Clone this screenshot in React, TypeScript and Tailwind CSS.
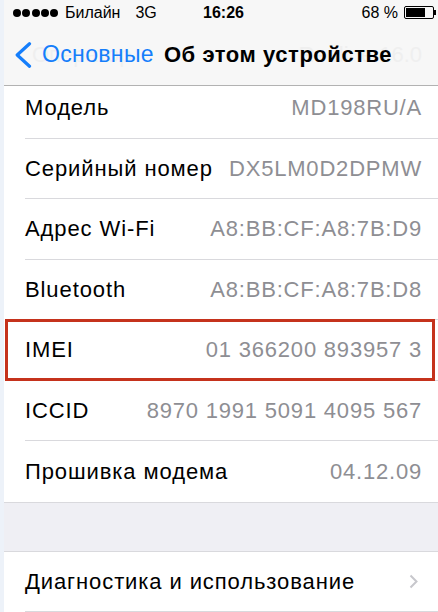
import { FC } from "react";

interface InfoRowType {
    label: string;
    value?: string;
    last?: boolean;
    chevron?: boolean;
    marked?: boolean;
}

const rows: InfoRowType[] = [
    { label: "Модель", value: "MD198RU/A" },
    { label: "Серийный номер", value: "DX5LM0D2DPMW" },
    { label: "Адрес Wi-Fi", value: "A8:BB:CF:A8:7B:D9" },
    { label: "Bluetooth", value: "A8:BB:CF:A8:7B:D8" },
    { label: "IMEI", value: "01 366200 893957 3", marked: true },
    { label: "ICCID", value: "8970 1991 5091 4095 567" },
    { label: "Прошивка модема", value: "04.12.09", last: true },
];

const StatusBar = () => {
    return (
        <div className="flex h-[24px] items-center pl-[9px] pr-[2px] pt-[1px] text-[16px] text-black">
            <div className="flex flex-1 items-center">
                <div className="flex gap-[1.25px]">
                    {[0, 1, 2, 3, 4].map((i) => (
                        <span key={i} className="h-[8px] w-[8px] rounded-full bg-black" />
                    ))}
                </div>
                <span className="ml-[7px]">Билайн</span>
                <span className="ml-[15px]">3G</span>
            </div>
            <span className="absolute left-[199px] font-bold">16:26</span>
            <div className="flex items-center">
                <span>68 %</span>
                <div className="ml-[6px] flex items-center">
                    <div className="h-[13px] w-[30px] rounded-[2px] border border-black p-[1px]">
                        <div className="h-full w-[72%] bg-black" />
                    </div>
                    <div className="h-[5px] w-[2px] bg-black" />
                </div>
            </div>
        </div>
    );
};

const NavBar = () => {
    return (
        <div className="relative flex h-[61px] items-center">
            <span className="absolute left-[28px] text-[22px] text-[#efefef]">Оператор</span>
            <span className="absolute right-[16px] text-[22px] text-[#efefef]">Redline 16.0</span>
            <svg className="relative ml-[11px] h-[26px] w-[17px]" viewBox="0 0 17 26" fill="none">
                <path d="M14.5 1.8 L2.2 13 L14.5 24.2" stroke="#157efb" strokeWidth="3.2" strokeLinecap="round" strokeLinejoin="round" />
            </svg>
            <span className="relative ml-[10px] text-[23px] tracking-[0.35px] text-[#157efb]">Основные</span>
            <span className="relative ml-[10px] text-[22px] font-bold tracking-[0.55px] text-black">Об этом устройстве</span>
        </div>
    );
};

const InfoRow: FC<InfoRowType> = ({ label, value, last, chevron, marked }) => {
    return (
        <div className="relative box-border h-[60.5px] bg-white pl-[21px]">
            <div className={`flex h-full items-center pr-[16px] ${last ? "" : "border-b border-[#d9d9dd]"}`}>
                <span className="text-[22px] tracking-[0.9px] text-black">{label}</span>
                <span className="ml-auto text-[22px] tracking-[0.8px] text-[#8e8e93]">{value}</span>
                {chevron && (
                    <svg className="mr-[4px] h-[15px] w-[9px]" viewBox="0 0 9 15" fill="none">
                        <path d="M1.5 1.5 L7.5 7.5 L1.5 13.5" stroke="#c7c7cc" strokeWidth="2" />
                    </svg>
                )}
            </div>
            {marked && (
                <div className="absolute -top-[1px] bottom-[0px] left-[1px] right-[3px] border-[3px] border-[#c5321c]" />
            )}
        </div>
    );
};

const App = () => {
    return (
        <div className="flex h-[612px] w-[438px] overflow-hidden bg-white font-['Liberation_Sans',Arial,sans-serif]">
            <div className="w-[4px] shrink-0 bg-[#edf2f9]" />
            <div className="relative flex flex-1 flex-col">
                <div className="relative z-10 h-[86px] shrink-0 border-b border-[#b2b2b2] bg-[#f7f7f7]">
                    <StatusBar />
                    <NavBar />
                </div>
                <div className="flex-1 overflow-hidden bg-[#efeff4]">
                    <div className="-mt-[8px] border-b border-[#d9d9dd]">
                        {rows.map((row) => (
                            <InfoRow key={row.label} {...row} />
                        ))}
                    </div>
                    <div className="h-[48px]" />
                    <div className="border-t border-[#d9d9dd]">
                        <InfoRow label="Диагностика и использование" chevron />
                    </div>
                </div>
            </div>
        </div>
    );
};

export default App;
